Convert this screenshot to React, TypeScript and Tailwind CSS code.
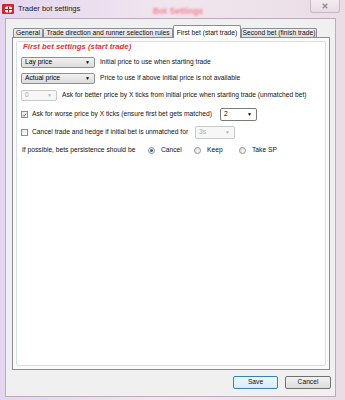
import React from "react";

type ComboKind = "button" | "edit" | "disabled";

function Combo({
  value,
  w,
  h = 11,
  kind = "button",
}: {
  value: string;
  w: number;
  h?: number;
  kind?: ComboKind;
}) {
  const box =
    kind === "button"
      ? "border-[#8e8f8f] bg-gradient-to-b from-[#f2f2f2] to-[#dcdcdc] text-black"
      : kind === "edit"
        ? "border-[#7a7a7a] bg-white text-black"
        : "border-[#c9c9c9] bg-[#f7f7f7] text-[#a8a8a8]";
  return (
    <div
      className={`flex items-center justify-between rounded-[2px] border pl-[3px] pr-[4px] ${box}`}
      style={{ width: w, height: h }}
    >
      <span className="leading-none">{value}</span>
      <span
        className={`text-[5px] leading-none ${kind === "disabled" ? "text-[#b8b8b8]" : "text-black"}`}
      >
        ▼
      </span>
    </div>
  );
}

function Check({ checked }: { checked?: boolean }) {
  return (
    <div className="flex h-[7px] w-[7px] shrink-0 items-center justify-center border border-[#8f8f8f] bg-gradient-to-br from-[#e6e6e6] to-white">
      {checked && (
        <svg viewBox="0 0 8 8" className="h-[6px] w-[6px]">
          <path d="M1.2 4.2 L3.2 6.2 L6.8 1.6" fill="none" stroke="#4a5f97" strokeWidth="1.4" />
        </svg>
      )}
    </div>
  );
}

function Radio({ checked, label, w }: { checked?: boolean; label: string; w: number }) {
  return (
    <div className="flex items-center" style={{ width: w }}>
      <div className="flex h-[7px] w-[7px] shrink-0 items-center justify-center rounded-full border border-[#8f8f8f] bg-gradient-to-br from-[#dedede] to-white">
        {checked && <div className="h-[3px] w-[3px] rounded-full bg-[#2a6fa6]" />}
      </div>
      <span className="ml-[6px]">{label}</span>
    </div>
  );
}

export default function App() {
  const tabs = [
    { label: "General", w: 30 },
    { label: "Trade direction and runner selection rules", w: 130 },
    { label: "First bet (start trade)", w: 68, active: true },
    { label: "Second bet (finish trade)", w: 76 },
  ];

  return (
    <div
      className="flex h-[400px] w-[345px] flex-col bg-gradient-to-r from-[#e3d6f0] via-[#f1e6ee] to-[#eadde6] text-[6.7px] text-[#111]"
      style={{ fontFamily: '"Liberation Sans", Arial, sans-serif' }}
    >
      {/* title bar */}
      <div className="relative flex h-[18px] shrink-0 items-start">
        <div className="ml-[2px] mt-[4px] flex h-[10px] w-[12px] items-center justify-center rounded-[1px] bg-[#d4242b]">
          <svg viewBox="0 0 10 8" className="h-[7px] w-[9px]">
            <rect x="1" y="0.5" width="8" height="7" rx="2" fill="white" />
            <path d="M5 0.5 V7.5 M1 4 H9" stroke="#b01820" strokeWidth="1.2" />
          </svg>
        </div>
        <span className="ml-[4px] mt-[4px] text-[7.5px] leading-[10px] text-[#1a1a1a]">
          Trader bot settings
        </span>
        <span className="absolute left-[153px] top-[7px] text-[8.5px] font-bold leading-none text-[#f06878] opacity-80 blur-[0.8px]">
          Bot Settings
        </span>
        <div className="ml-auto mr-[5px] flex h-[13px] w-[30px] items-center justify-center rounded-b-[3px] border border-t-0 border-[#c8b8c4] bg-gradient-to-b from-[#f4eaf0] to-[#e8dce4]">
          <svg viewBox="0 0 8 8" className="h-[6px] w-[6px]">
            <path d="M1 1 L7 7 M7 1 L1 7" stroke="#8a8a8a" strokeWidth="1.6" />
          </svg>
        </div>
      </div>

      {/* client area */}
      <div className="ml-[5px] mr-[9px] mb-[3px] flex flex-1 flex-col border border-[#b9adb9] bg-[#f0f0f0]">
        {/* tab strip */}
        <div className="flex h-[18px] items-end pl-[7px]">
          {tabs.map((t) =>
            t.active ? (
              <div
                key={t.label}
                className="relative z-10 -mb-px flex h-[13px] items-start justify-center whitespace-nowrap rounded-t-[2px] border border-b-0 border-[#898c95] bg-white pt-[2px]"
                style={{ width: t.w }}
              >
                {t.label}
              </div>
            ) : (
              <div
                key={t.label}
                className="flex h-[9px] items-center justify-center whitespace-nowrap rounded-t-[2px] border border-b-0 border-[#898c95] bg-gradient-to-b from-[#f2f2f2] to-[#dcdcdc]"
                style={{ width: t.w }}
              >
                {t.label}
              </div>
            ),
          )}
        </div>

        {/* tab page */}
        <div className="ml-[6px] flex h-[333px] w-[318px] flex-col border border-[#898c95] bg-[#fbfbfb] p-[3px]">
          <div className="flex flex-1 flex-col rounded-[2px] border border-[#d5dfe5] bg-white pl-[4px]">
            <div className="flex h-[10px] items-center pl-[2px] text-[7.8px] font-bold italic text-[#e8323a]">
              First bet settings (start trade)
            </div>

            <div className="mt-[5px] flex h-[11px] items-center">
              <Combo value="Lay price" w={74} />
              <span className="ml-[5px]">Initial price to use when starting trade</span>
            </div>

            <div className="mt-[5px] flex h-[11px] items-center">
              <Combo value="Actual price" w={74} />
              <span className="ml-[5px]">Price to use if above initial price is not available</span>
            </div>

            <div className="mt-[6px] flex h-[11px] items-center">
              <Combo value="0" w={36} kind="disabled" />
              <span className="ml-[5px]">
                Ask for better price by X ticks from initial price when starting trade (unmatched bet)
              </span>
            </div>

            <div className="mt-[7px] flex h-[13px] items-center">
              <Check checked />
              <span className="w-[192px] shrink-0 pl-[4px]">
                Ask for worse price by X ticks (ensure first bet gets matched)
              </span>
              <Combo value="2" w={37} h={13} kind="edit" />
            </div>

            <div className="mt-[5px] flex h-[13px] items-center">
              <Check />
              <span className="w-[167px] shrink-0 pl-[4px]">
                Cancel trade and hedge if initial bet is unmatched for
              </span>
              <Combo value="3s" w={40} h={13} kind="disabled" />
            </div>

            <div className="mt-[6px] flex h-[10px] items-center pl-[1px]">
              <span className="w-[126px] shrink-0">If possible, bets persistence should be</span>
              <Radio checked label="Cancel" w={46} />
              <Radio label="Keep" w={45} />
              <Radio label="Take SP" w={40} />
            </div>
          </div>
        </div>

        {/* buttons */}
        <div className="mt-[6px] flex justify-end gap-[7px] pr-[4px]">
          <button className="h-[13px] w-[45px] rounded-[2px] border border-[#3c7fb1] bg-gradient-to-b from-[#eaf6fd] to-[#d9eefa] leading-none">
            Save
          </button>
          <button className="h-[13px] w-[46px] rounded-[2px] border border-[#707070] bg-gradient-to-b from-[#f2f2f2] to-[#dddddd] leading-none">
            Cancel
          </button>
        </div>
      </div>
    </div>
  );
}
